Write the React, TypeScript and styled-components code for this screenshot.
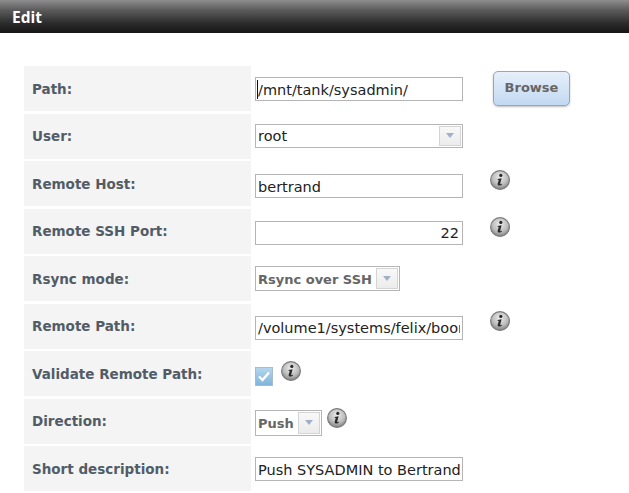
import { createGlobalStyle } from 'styled-components';
import styled from 'styled-components';

const GlobalStyle = createGlobalStyle`
  html, body {
    margin: 0;
    padding: 0;
    background: #fff;
    overflow: hidden;
  }
  body {
    font-family: "DejaVu Sans", Verdana, sans-serif;
  }
`;

const TitleBar = styled.div`
  height: 33px;
  padding-left: 12px;
  box-sizing: border-box;
  display: flex;
  align-items: center;
  background: linear-gradient(to bottom, #8e8e8e 0%, #5c5c5c 30%, #2c2c2c 70%, #161616 100%);
  color: #fff;
  font-family: "Open Sans", sans-serif;
  font-size: 15.5px;
  font-weight: 700;
`;

const Form = styled.div`
  margin: 33px 0 0 24px;
  display: grid;
  grid-auto-rows: 45px;
  row-gap: 2.5px;
`;

const Row = styled.div`
  display: grid;
  grid-template-columns: 227px 1fr;
`;

const Label = styled.div`
  background: #f4f4f4;
  padding-left: 8px;
  display: flex;
  align-items: center;
  color: #525c66;
  font-size: 13.5px;
  font-weight: 700;
`;

const Value = styled.div`
  display: flex;
  align-items: flex-start;
  padding-left: 4px;
`;

const TextField = styled.input<{ $top: number; $right?: boolean }>`
  width: 208px;
  height: 24px;
  margin-top: ${(p) => p.$top}px;
  box-sizing: border-box;
  border: 1px solid #b5b5b5;
  padding: 1px ${(p) => (p.$right ? 3 : 2)}px 0 2px;
  outline: none;
  background: #fff;
  color: #222;
  font-family: "DejaVu Sans", sans-serif;
  font-size: 14.5px;
  text-align: ${(p) => (p.$right ? 'right' : 'left')};
`;

const PathField = styled.div`
  position: relative;
  display: flex;
`;

const Caret = styled.span`
  position: absolute;
  left: 2px;
  top: 14px;
  width: 1px;
  height: 19px;
  background: #111;
`;

const Select = styled.div<{ $top: number; $width: number; $bold?: boolean; $height?: number }>`
  width: ${(p) => p.$width}px;
  height: ${(p) => p.$height ?? 24}px;
  margin-top: ${(p) => p.$top}px;
  box-sizing: border-box;
  border: 1px solid #b5b5b5;
  display: flex;
  align-items: stretch;
  background: #fff;
  color: ${(p) => (p.$bold ? '#666' : '#222')};
  font-size: ${(p) => (p.$bold ? 13 : 14.5)}px;
  font-weight: ${(p) => (p.$bold ? 700 : 400)};
`;

const SelectText = styled.span`
  flex: 1;
  padding: 1px 0 0 2px;
  display: flex;
  align-items: center;
  white-space: nowrap;
`;

const SelectArrow = styled.span`
  width: 22px;
  box-sizing: border-box;
  margin: 1px;
  border: 1px solid #d4d4d4;
  background: linear-gradient(to bottom, #f8f8f8, #ececec);
  display: flex;
  align-items: center;
  justify-content: center;

  &::after {
    content: '';
    border-left: 4px solid transparent;
    border-right: 4px solid transparent;
    border-top: 5px solid #a2b0c8;
  }
`;

const Check = styled.div<{ $top: number }>`
  width: 18px;
  height: 19px;
  margin-top: ${(p) => p.$top}px;
  box-sizing: border-box;
  border: 1px solid #a8bccc;
  background: linear-gradient(to bottom, #b4d6ee, #7fb5da);
  display: flex;
  align-items: center;
  justify-content: center;
`;

const BrowseButton = styled.button`
  width: 77px;
  height: 35px;
  margin: 5px 0 0 30px;
  box-sizing: border-box;
  border: 1px solid #8fa8c4;
  border-radius: 5px;
  background: linear-gradient(to bottom, #e6effa, #c2d9f2);
  box-shadow: 0 1px 2px rgba(0, 0, 0, 0.25);
  color: #666;
  font-family: "DejaVu Sans", sans-serif;
  font-size: 13px;
  font-weight: 700;
  padding: 0 0 2px;
`;

const InfoWrap = styled.span<{ $top: number; $left: number }>`
  width: 20px;
  height: 20px;
  margin: ${(p) => p.$top}px 0 0 ${(p) => p.$left}px;
  display: block;
`;

const InfoIcon = ({ top, left }: { top: number; left: number }) => (
  <InfoWrap $top={top} $left={left}>
    <svg width="20" height="20" viewBox="0 0 20 20">
      <defs>
        <radialGradient id="infoFill" cx="50%" cy="35%" r="68%">
          <stop offset="0%" stopColor="#ededed" />
          <stop offset="60%" stopColor="#bcbcbc" />
          <stop offset="100%" stopColor="#777" />
        </radialGradient>
      </defs>
      <circle cx="10" cy="10" r="9.4" fill="url(#infoFill)" stroke="#7d7d7d" strokeWidth="1.2" />
      <circle cx="10.8" cy="5.4" r="1.6" fill="#2a2a2a" />
      <path d="M7.6 9 L11.6 8.3 L10.2 13.6 Q10 14.6 11.8 13.7 L12 14.4 Q9.7 15.9 8.3 15.5 Q7.3 15.1 7.7 13.6 L8.8 10 L7.6 9.7 Z" fill="#2a2a2a" />
    </svg>
  </InfoWrap>
);

const App = () => (
  <>
    <GlobalStyle />
    <TitleBar>Edit</TitleBar>
    <Form>
      <Row>
        <Label>Path:</Label>
        <Value>
          <PathField>
            <TextField $top={11} readOnly defaultValue="/mnt/tank/sysadmin/" />
            <Caret />
          </PathField>
          <BrowseButton>Browse</BrowseButton>
        </Value>
      </Row>
      <Row>
        <Label>User:</Label>
        <Value>
          <Select $top={10} $width={208}>
            <SelectText>root</SelectText>
            <SelectArrow />
          </Select>
        </Value>
      </Row>
      <Row>
        <Label>Remote Host:</Label>
        <Value>
          <TextField $top={13} readOnly defaultValue="bertrand" />
          <InfoIcon top={9} left={27} />
        </Value>
      </Row>
      <Row>
        <Label>Remote SSH Port:</Label>
        <Value>
          <TextField $top={12} $right readOnly defaultValue="22" />
          <InfoIcon top={8} left={27} />
        </Value>
      </Row>
      <Row>
        <Label>Rsync mode:</Label>
        <Value>
          <Select $top={10} $width={145} $height={25} $bold>
            <SelectText>Rsync over SSH</SelectText>
            <SelectArrow />
          </Select>
        </Value>
      </Row>
      <Row>
        <Label>Remote Path:</Label>
        <Value>
          <TextField $top={12} readOnly defaultValue="/volume1/systems/felix/boom" />
          <InfoIcon top={7} left={27} />
        </Value>
      </Row>
      <Row>
        <Label>Validate Remote Path:</Label>
        <Value>
          <Check $top={16}>
            <svg width="14" height="13" viewBox="0 0 14 13">
              <path d="M2 6.5 L5.5 10 L12 2.5" fill="none" stroke="#fff" strokeWidth="2.4" />
            </svg>
          </Check>
          <InfoIcon top={10} left={8} />
        </Value>
      </Row>
      <Row>
        <Label>Direction:</Label>
        <Value>
          <Select $top={11} $width={67} $height={26} $bold>
            <SelectText>Push</SelectText>
            <SelectArrow />
          </Select>
          <InfoIcon top={9} left={5} />
        </Value>
      </Row>
      <Row>
        <Label>Short description:</Label>
        <Value>
          <TextField $top={11} readOnly defaultValue="Push SYSADMIN to Bertrand" />
        </Value>
      </Row>
    </Form>
  </>
);

export default App;
